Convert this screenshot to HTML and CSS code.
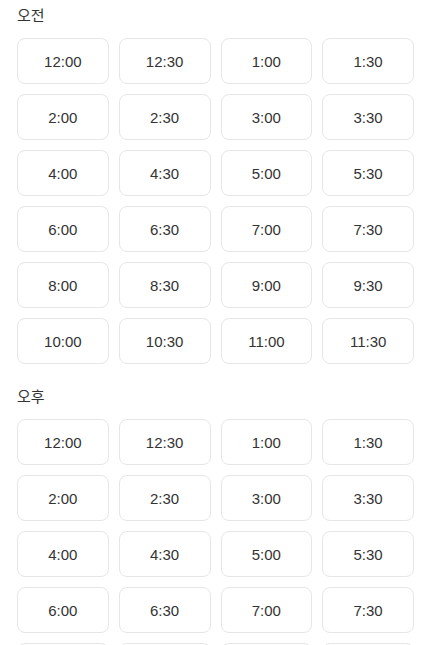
FILE: index.html
```html
<!DOCTYPE html>
<html lang="ko">
<head>
    <meta charset="UTF-8">
    <meta name="viewport" content="width=device-width, initial-scale=1.0">
    <title>시간 선택</title>
    <link rel="stylesheet" href="styles.css">
</head>
<body>
    <div class="picker">
        <div class="period">
            <div class="period-label">오전</div>
            <div class="slots">
                <button class="slot">12:00</button>
                <button class="slot">12:30</button>
                <button class="slot">1:00</button>
                <button class="slot">1:30</button>
                <button class="slot">2:00</button>
                <button class="slot">2:30</button>
                <button class="slot">3:00</button>
                <button class="slot">3:30</button>
                <button class="slot">4:00</button>
                <button class="slot">4:30</button>
                <button class="slot">5:00</button>
                <button class="slot">5:30</button>
                <button class="slot">6:00</button>
                <button class="slot">6:30</button>
                <button class="slot">7:00</button>
                <button class="slot">7:30</button>
                <button class="slot">8:00</button>
                <button class="slot">8:30</button>
                <button class="slot">9:00</button>
                <button class="slot">9:30</button>
                <button class="slot">10:00</button>
                <button class="slot">10:30</button>
                <button class="slot">11:00</button>
                <button class="slot">11:30</button>
            </div>
        </div>

        <div class="period">
            <div class="period-label">오후</div>
            <div class="slots">
                <button class="slot">12:00</button>
                <button class="slot">12:30</button>
                <button class="slot">1:00</button>
                <button class="slot">1:30</button>
                <button class="slot">2:00</button>
                <button class="slot">2:30</button>
                <button class="slot">3:00</button>
                <button class="slot">3:30</button>
                <button class="slot">4:00</button>
                <button class="slot">4:30</button>
                <button class="slot">5:00</button>
                <button class="slot">5:30</button>
                <button class="slot">6:00</button>
                <button class="slot">6:30</button>
                <button class="slot">7:00</button>
                <button class="slot">7:30</button>
                <button class="slot">8:00</button>
                <button class="slot">8:30</button>
                <button class="slot">9:00</button>
                <button class="slot">9:30</button>
                <button class="slot">10:00</button>
                <button class="slot">10:30</button>
                <button class="slot">11:00</button>
                <button class="slot">11:30</button>
            </div>
        </div>
    </div>
</body>
</html>
```

FILE: styles.css
```css
body {
    font-family: 'Liberation Sans', 'Noto Sans CJK KR', Arial, sans-serif;
    margin: 0;
    padding: 6px 11px 0 17px;
    background-color: #fff;
    color: #333;
}

.period {
    margin-bottom: 23px;
}

.period-label {
    font-size: 15px;
    line-height: 20px;
    margin-bottom: 12px;
    color: #333;
}

.slots {
    display: grid;
    grid-template-columns: repeat(4, 1fr);
    gap: 10px;
}

.slot {
    height: 46px;
    padding: 0;
    background: #fff;
    border: 1px solid #e6e6e6;
    border-radius: 8px;
    font-family: inherit;
    font-size: 15px;
    color: #333;
    cursor: pointer;
}

.slot:hover {
    border-color: #ccc;
}
```
